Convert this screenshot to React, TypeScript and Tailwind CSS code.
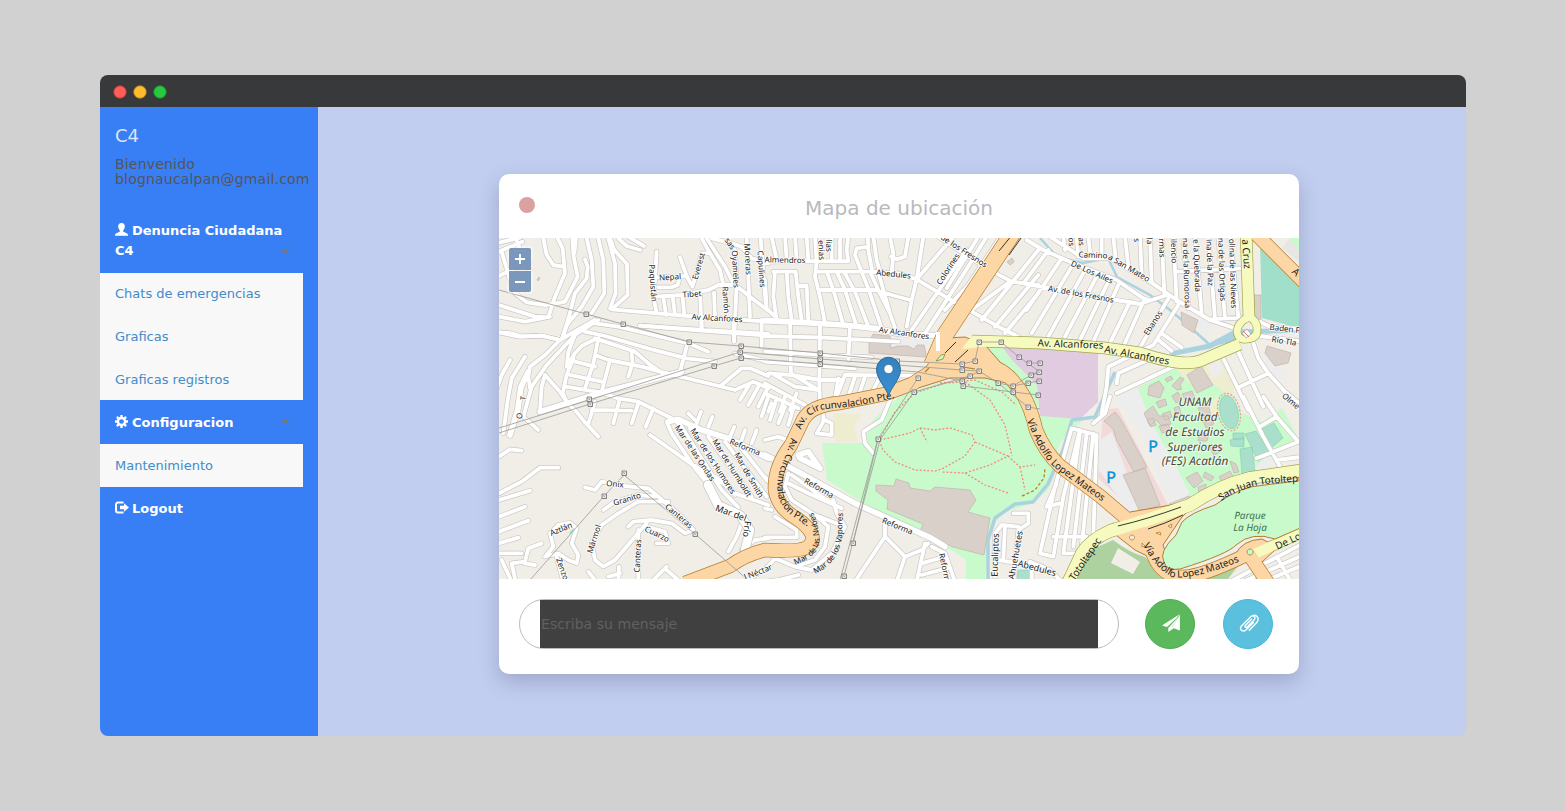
import React from 'react';

type Tile = { x: number; y: number; streets: string; wide?: string };
type Label = [text: string, x: number, y: number, angle?: number, size?: number];

/* Street geometry is stored in 1/3 pixel units, one block per map tile. */
const tiles: Tile[] = [
  {
    x: 495, y: 170,
    streets:
      'M12,218L75,203M12,245L82,215M12,318L70,290L105,278M62,204L80,250L105,300M20,245L45,330L60,370L95,397L150,405L180,400M145,205L155,255L175,285L205,290M188,205L203,235L210,310L180,380L160,442L120,440L12,405M12,440L90,455L165,440M232,205L236,260L248,320L210,395L170,403M243,205L238,250M275,205L290,270L295,350L260,410L215,465L203,500M310,205L325,270L328,370L290,430M340,205L360,280L362,370L345,415M345,205L358,240L396,282L398,375L350,418M270,268L278,290L275,325L240,370L222,440L203,500M12,487L50,490L80,500L140,497L195,510M370,205L395,228L435,240M400,200L447,228M350,418L580,438L820,455M435,467L620,482L820,497M485,245L480,330L475,380L485,430M482,322L575,318M555,262L575,318L592,350L605,310L620,250L640,250M490,352L530,352L548,345L552,330M480,380L560,375L640,360L670,345L720,345M505,380L513,435M533,380L540,435M562,375L568,435M615,365L620,480M657,368L660,440M620,205L645,250L675,300L685,345M635,205L690,290L715,340L765,380L820,422M650,205L710,220L740,230L770,265L820,280M720,240L725,345L717,515M755,205L765,440M797,205L812,400',
  },
  {
    x: 495, y: 320,
    streets:
      'M222,0L203,50M310,0L240,45L155,135L110,200L85,290L130,330M12,37L70,50L140,47L195,60L255,25L300,0M195,60L150,105L105,140L100,170L105,205M240,45L220,95L215,140M236,115L215,165L203,220L215,245M270,35L330,48L470,88L575,115L660,125M300,10L370,20L580,70L640,95M300,55L420,95L460,130L495,155M300,58L260,78L240,100L215,140M310,55L295,130L270,205M240,125L300,140M300,105L340,120L440,140L495,155M225,165L320,185M213,200L320,218M345,120L320,215M410,100L413,130L400,170M575,80L555,155M495,155L720,210L775,185L820,205M150,165L190,210L215,245M150,165L140,200L135,275M215,250L240,270L268,305L310,350M320,218L370,235L430,245L530,295M45,120L20,165L8,200M90,110L50,175L38,240L25,340M300,245L293,270L280,310M290,270L410,272M375,235L355,310M430,250L410,310M475,265L452,320M435,17L600,28L820,42M620,0L620,30M715,0L717,65M800,0L800,80M680,195L740,145L765,145L820,168M765,190L735,240M790,200L760,255M820,200L790,260M580,280L600,300M618,275L605,310M652,290L640,320M720,100L820,125M718,320L705,350M750,330L740,360M785,330L770,370',
    wide: 'M135,275L320,218L560,155M100,155L78,200L68,270L45,345',
  },
  {
    x: 765, y: 230,
    streets:
      'M0,95L250,93L245,60L250,20M150,20L155,95L150,140L165,200L180,280M20,20L35,90M60,20L65,90M90,20L95,90M125,20L130,90M200,20L200,93M225,20L225,93M25,125L92,125M30,125L25,200L35,270M65,125L70,200L80,270M92,125L100,200L110,270M102,168L125,168L130,275M0,150L5,235L40,270M160,125L320,125L400,130L455,148L550,205L700,290L760,320M160,180L330,180L380,195L435,210M185,125L205,180L235,285M215,125L240,180L275,290M240,130L270,185L310,290M290,125L315,190L350,295M315,125L340,180L375,250L392,300M340,125L355,180L375,250M270,75L290,125M270,75L275,55L310,50L308,20M308,50L322,125M325,20L335,90L345,125M375,20L385,70L380,130M430,20L420,80L395,88L378,80M455,148L440,210L425,290M475,20L455,148M565,20L455,148M605,60L440,300M665,20L600,125L480,310M700,30L610,165L540,240M520,20L665,115L740,155L820,165M650,270L820,60M690,290L820,135M720,310L820,190M620,240L735,155M640,20L545,175M0,318L160,322L400,335M75,275L78,430M165,285L163,470L165,520M255,290L250,390M0,365L320,382M0,395L270,415M10,430L80,435L165,450L235,450M20,430L90,470L160,480M78,430L160,480M240,435L445,437M240,435L215,500M270,440L250,500M300,440L280,500M345,440L320,490M400,440L380,480M0,460L120,525M0,490L100,535M20,520L10,545M60,500L45,545M210,505L220,445',
    wide: 'M0,272L120,278L235,285L330,295L400,310L530,318',
  },
  {
    x: 1030, y: 230,
    streets:
      'M-20,160L60,175L260,210L330,222L410,195M60,20L160,85L240,85L360,155L440,210L540,270L630,300M-10,30L40,60L130,100L260,150L340,205L360,212M55,60L-20,160M95,85L-10,240M125,110L5,310M165,120L55,320M200,140L105,320M235,155L150,330M265,165L190,335M300,215L235,350M340,215L280,350M415,205L320,370M445,225L370,345L235,410L230,470L215,550M320,370L365,385L265,430L260,460M100,20L105,60M140,20L145,80M175,20L180,65M215,20L215,75M250,20L258,95M285,20L295,110M330,20L335,130M360,20L365,155M395,20L403,190M430,20L440,215M460,20L475,235M495,20L515,250M535,20L555,265M565,20L585,265M600,20L625,260M440,125L630,115M540,268L650,262M690,275L720,290L820,298M690,318L820,335M670,340L685,385L715,430L765,485L820,530M620,355L700,530M575,375L655,540M630,470L715,430M260,490L430,410M395,310L455,352M385,330L425,362',
  },
  {
    x: 495, y: 400,
    streets:
      'M12,170L45,148L80,152M12,280L80,245L135,203L190,203M12,300L105,272M12,350L90,320M12,395L100,362M12,430L70,413M12,460L80,460M465,105L530,150L600,200M515,65L530,100L590,190M600,200L660,230L720,280L820,315M540,62L560,80L680,270L730,322M585,85L720,285M640,110L770,290M690,125L815,290M740,145L815,240M270,262L300,270L320,245L390,258L460,265L560,350L595,390L570,400L530,370L470,360L415,365L400,380M325,330L360,305L430,285L480,290M520,305L430,305L370,340L320,375L290,430L300,480L325,500L360,480L455,370M430,390L430,545M455,380L510,395L520,430L485,430M150,470L175,440L165,400L190,375L225,368L245,385L230,430L250,465L245,490L220,480L190,460L150,470M140,430L100,445L90,485L50,490L62,545M90,490L120,495M185,470L205,545M740,370L725,410L700,455M470,545L515,500M372,500L370,545M340,530L375,520M750,545L820,500M515,510L550,540M280,515L300,540M20,480L50,545M740,450L780,420L820,415',
    wide: 'M520,65L550,58L620,90L700,115L820,175M600,200L640,250L660,300L690,325',
  },
  {
    x: 765, y: 400,
    streets:
      'M70,220L60,260L80,300L150,345L190,380L180,440L150,480L90,500L30,475L0,510M80,225L170,290L205,310M70,250L130,280L230,325M205,300L215,340L240,380L200,460L140,510L90,500M150,345L240,380M0,230L15,250M30,350L70,375L95,390L95,412L0,412M0,325L20,330M360,365L360,410L270,545M360,410L420,470L470,450L490,430M420,470L395,545M480,430L455,545M500,440L540,460L570,545M470,490L540,470M470,525L545,505M375,0L350,60L295,95L300,130L325,160M175,45L175,65L155,100L200,105L200,70L180,60M0,120L40,110L80,125M-10,50L10,-10M15,60L35,-5M40,70L60,20M70,75L85,25M95,-20L75,30M745,340L790,340L790,370L760,390L745,545M760,380L710,375L690,400L690,530M720,380L715,480M700,480L820,500M800,545L800,500M0,545L40,540L100,525',
    wide: 'M0,165L80,205L270,310L380,360L500,415L540,440M100,165L130,155L165,205L105,175Z',
  },
  {
    x: 1030, y: 400,
    streets:
      'M125,85L75,260L30,460L70,470L100,290L150,90M125,85L200,105L190,410M150,95L100,460L135,460M170,100L130,440M190,100L155,440M70,410L170,410L165,440M50,320L80,250M50,320L90,310M0,485L60,510L95,545M240,-10L225,40L190,70M640,-10L700,110L750,200M690,80L740,50M700,-10L740,50L805,125L680,175M740,180L820,170M600,545L820,430M640,545L820,465M700,545L820,495M670,500L720,545M740,470L780,540M170,440L190,405L250,375',
  },
];

const minorLabels: Label[] = [
  ['Paquistán', 653, 283, 86], ['Nepal', 670, 277, -4], ['Everest', 698.5, 266, -74], ['Tibet', 692, 294, -4],
  ['Ramón', 726, 300, 86], ['Oyameles', 735.5, 269, 87], ['sas', 730, 243.5, 55], ['Moreras', 748, 259, 87],
  ['Capulines', 761.5, 269, 86], ['Almendros', 785, 260, 1], ['lias', 829, 245.5, 88], ['enias', 821.5, 250, 88],
  ['Abedules', 893.5, 274, 6], ['Colorines', 948, 269, -57], ['de los Fresnos', 964, 251, 33],
  ['Av Alcanfores', 717, 318, 3], ['Av Alcanfores', 904, 333, 8], ['Camino', 1093, 255, 2], ['a San Mateo', 1129, 268, 30],
  ['De Los Ailes', 1092, 272, 24], ['Av. de los Fresnos', 1081, 294, 10], ['Ebanos', 1153, 323, -57],
  ['os', 1071.500, 242, 88], ['as', 1081.5, 241.5, 88], ['s', 1137, 240, 88], ['la', 1149.5, 241, 88],
  ['rmas', 1162, 248, 88], ['ilencio', 1174, 251, 88], ['ina de la Rumorosa', 1186.5, 272, 88],
  ['e la Quebrada', 1197, 265.500, 88], ['ina de la Paz', 1210, 262.500, 88], ['na de las Ortigas', 1222, 269.500, 88],
  ['olina de las Nieves', 1233, 273.500, 88], ['Baden P', 1285, 328.500, 6], ['Río Tla', 1284, 341, 9],
  ['Olme', 1291, 401, 40], ['Reforma', 745, 447, 22], ['Mar de las Ondas', 695, 453, 56],
  ['Mar de los Humores', 713, 461, 57], ['Mar de Humboldt', 732, 468, 58], ['Mar de Smith', 749, 475, 60],
  ['Mar del', 731, 513, 20, 9], ['Frío', 747, 529, 96, 9], ['Canteras', 679, 516, 40], ['Cuarzo', 657, 534, 26],
  ['Canteras', 637.5, 556, -87], ['Mármol', 594, 539, -72], ['Granito', 627, 499, -17], ['Onix', 615, 484, 5],
  ['Aztlán', 561, 529, -22], ['Zenzo', 562.500, 569, 70], ['l Néctar', 758, 572, -22], ['O', 519.5, 416, -85, 8],
  ['T', 523, 398, -85, 7], ['Reforma', 819, 488, 29], ['Reforma', 897.5, 526, 22], ['Reform', 944.500, 567, 78],
  ['Eucaliptos', 995, 555, -88, 9], ['Ahuehuetes', 1015.5, 555, -80, 8.7], ['Abedules', 1037, 568, 15, 9],
];

const mainLabels: Label[] = [
  ['Av. Alcanfores', 1070.5, 344, 2, 10], ['Av. Alcanfores', 1137, 355, 11, 10], ['a Cruz', 1246.500, 254, 86, 10],
  ['Totoltepec', 1085, 559, -56, 10], ['De Lo', 1288, 541, -25, 10], ['A', 1296, 272, 42, 10],
];

const curved: [id: string, d: string, text: string, size: number][] = [
  ['circ-a', 'M801,430 Q806,414 822,409.500 L852,406.500 L895,398', 'Av. Circunvalacion Pte.', 9.9],
  ['circ-b', 'M791,438 Q789,447 785,457 Q774,480 779,498 Q783,511 796,518 L809,528', 'Av. Circunvalacion Pte.', 9.8],
  ['via-a', 'M1027,420 Q1040,455 1055,468 L1107,505', 'Vía Adolfo Lopez Mateos', 9.9],
  ['via-b', 'M1143,545 Q1155,568 1172,577 Q1195,580 1243,560', 'Vía Adolfo Lopez Mateos', 9.9],
  ['juan', 'M1221,501 Q1243,486 1270,483.500 L1320,480', 'San Juan Totoltepe', 9.9],
  ['nubes', 'M795,565 Q823,554 819,536 Q818,520 811,509', 'Mar de las Nubes', 8],
  ['vapores', 'M815,574 Q838,563 842,538 L843,510', 'Mar de los Vapores', 8],
];

const pylons: [number, number][] = [
  [586, 314], [623, 324], [689, 342], [741, 346], [740, 352], [741, 358], [714, 366], [820, 353], [820, 359], [820, 364],
  [897, 361], [589, 399], [590, 404], [624, 473], [604, 496], [695, 534], [853, 543], [844, 576], [878, 439], [914, 392],
  [918, 378], [962, 364], [962, 370], [975, 361], [979, 342], [1001, 342], [1019, 357], [1029, 363], [1040, 363],
  [1039, 372], [1031, 375], [1039, 381], [1028, 383], [1038, 395], [1028, 407], [1013, 386], [1013, 392], [998, 383],
  [979, 371], [970, 376], [962, 381], [963, 386],
];

const orangeRoads: [string, number][] = [
  ['M1016,228L945,335L932,365', 16],
  ['M1250,228L1305,283', 13],
  ['M940,366L912,384L885,394L840,403Q811,405 803,420L791,445Q774,467 775,490Q778,508 796,518Q821,535 808,547Q800,552 765,550Q745,555 730,566L685,583', 13],
  ['M945,365L975,366Q1000,362 1017,386Q1030,402 1036,430Q1045,452 1060,466L1100,496L1133,524L1150,545Q1158,575 1180,577Q1200,578 1250,553', 13],
  ['M1248,553L1268,583', 13],
];

const yellowRoads: [string, number][] = [
  ['M972,341L1040,343L1105,348L1140,353Q1182,367 1200,361L1240,344', 11],
  ['M1246,230L1249,318', 11],
  ['M1067,585L1082,553Q1090,540 1110,531L1150,519L1190,505Q1220,485 1250,478L1305,470', 12],
  ['M1250,556L1305,531', 10],
];

const roundabout = 'M1249,317Q1238,322 1237,331Q1238,341 1247,339Q1257,338 1257,331Q1258,321 1249,317Z';

function CityMap() {
  const tile = (t: Tile) => `translate(${t.x} ${t.y}) scale(0.33333)`;
  const label = ([text, x, y, a = 0, size = 8]: Label, i: number) => (
    <text key={i} fontSize={size} textAnchor="middle" dy="0.35em" transform={`translate(${x} ${y}) rotate(${a})`}>
      {text}
    </text>
  );
  return (
    <svg viewBox="499 238 800 341" className="block h-[341px] w-[800px] font-['Noto_Sans','Open_Sans',sans-serif]" textRendering="geometricPrecision">
      <rect x="499" y="238" width="800" height="341" fill="#f1eee8" />

      {/* parks and land use */}
      <g fill="#c8facc">
        <path d="M822,443L863,443L873,420L900,396L940,382L985,378L1012,386L1025,405L1034,440L1055,470L1048,490L1033,503L1005,512L992,525L987,556L985,580L966,580L966,560L950,549L887,518L827,480Z" />
        <path d="M983,347L1040,348L1040,408L1025,400L1010,370L990,362Z" />
        <path d="M1036,414L1085,418L1062,440L1052,462L1040,440Z" />
        <path d="M1137,388L1178,367L1232,393L1240,412L1262,422L1282,408L1299,440L1240,476L1190,500L1177,470L1150,425Z" />
        <path d="M1290,238h9v22Z" />
      </g>
      <path d="M1290,238l9,14v10l-17,-14z" fill="#e8e5e5" />
      <path d="M1003,348L1098,350L1098,402L1080,419L1040,416L1037,385L1012,360Z" fill="#e0cbe0" />
      <path d="M1175,367L1222,352L1236,385L1232,400L1208,378L1190,384ZM1208,405L1218,395L1216,424L1212,426ZM833,413L863,414L854,426L858,442L835,442Z" fill="#efedd0" />
      <path d="M1103,410L1118,408L1168,505L1145,522L1098,478Z" fill="#f2dada" />
      <path d="M1117,395L1137,385L1150,420L1178,470L1190,494L1170,505L1140,430L1118,405ZM1100,440L1112,432L1143,518L1135,521L1099,470ZM1195,322L1210,315L1213,327L1204,338ZM1207,366L1218,358L1224,372L1214,379ZM1262,350L1287,372L1285,378L1272,379ZM890,335L930,338L925,352L890,350ZM534,238h4v12h-4zM1256,466l10,-9 9,2 1,5-20,5z" fill="#ededed" />
      <path d="M1113,540Q1130,553 1145,557L1162,575L1180,583L1060,583L1080,555ZM1200,579L1238,566L1225,583Z" fill="#aed1a0" />
      <path d="M1118,548L1140,562L1133,574L1111,563Z" fill="#f1eee8" />
      <path d="M1260,244L1305,290L1305,330L1262,318Z" fill="#a2dfcb" />
      <g fill="#aae0cb" stroke="#7fcfb2" strokeWidth=".6">
        <path d="M1262,429l12,-6 9,15-12,10zM1245,434l11,-3 14,22-12,8zM1240,449l12,-2 3,25-13,2zM1230,440l14,-2v9l-13,-1zM1233,433h11v6h-11zM1018,570h13v10h-14z" />
        <ellipse cx="1229" cy="412" rx="9" ry="17" transform="rotate(-12 1229 412)" />
      </g>
      <ellipse cx="1229" cy="412" rx="11" ry="19" transform="rotate(-12 1229 412)" fill="none" stroke="#f09a8e" strokeWidth="1.200" strokeDasharray="2 1.500" />

      {/* water */}
      <g fill="none" stroke="#aad3df" strokeLinejoin="round">
        <path d="M1040,238L1057,257L1083,263L1108,258L1117,277L1150,295L1170,310L1190,327L1210,345" strokeWidth="2.500" />
        <path d="M1170,354L1210,346L1240,332L1305,330" strokeWidth="5" />
        <path d="M1210,345L1238,330L1238,338Z" strokeWidth="4" fill="#aad3df" />
        <path d="M988,583L988,540L995,518L1015,504L1033,502L1048,484L1063,450L1072,420L1095,417L1115,372" strokeWidth="3.500" />
      </g>

      {/* buildings */}
      <g fill="#d9d0c9" stroke="#c2b4aa" strokeWidth=".7">
        <path d="M876,485L894,486L896,479L909,483L910,488L930,491L935,487L970,490L976,500L968,512L990,518L984,555L953,547L920,532L923,524L887,509L888,500L876,491Z" />
        <path d="M869,342L873,334L890,336L891,348L898,346L908,346L914,349L917,345L924,345L926,354L925,357L869,353Z" />
        <path d="M1104,421l11,-9 6,8 26,47 -13,5 -17,-31 -4,-12zM1123,475l22,-7 15,37-20,7zM1187,375l14,-9 12,19-16,8zM1181,312l17,8-4,13-12,-8zM1267,346l24,7-3,10-13,3-10,-13zM1254,295h7v27h-6zM1169,504l20,-8 3,4-20,7z" />
        <path d="M1149,386l10,-5 5,7-4,10-12,-3zM1165,379l6,-3 2,3-6,3zM1172,386l8,-9 4,2-4,6 2,4-5,1zM1144,413l9,-7 6,10 9,0 3,8-9,2-6,-6-6,6zM1182,394l10,-3 3,7-8,5zM1198,408l10,-4 3,12-8,4zM1203,421l8,-3 3,6-8,4zM1172,396l6,-4 4,8-6,3zM1156,402l9,-3 2,6-8,3zM1162,414l8,-3 2,6-7,3zM1200,432l9,2-2,7-9,0zM1210,448l10,-4 3,5-9,7zM1186,478l11,-6 6,9-9,7zM1198,487l8,-3v5l-7,5zM1219,477l11,-6 5,8-13,3zM1159,426l9,-2 3,6-9,3zM1174,408l5,-2 2,8-5,2zM1205,472l9,5-3,4-8,-4zM1230,461l6,3 3,8-5,1zM1147,420l6,-2 3,7-5,2z" />
        <path d="M537,280l2,-3 1,1-2,3zM1007,262l5,-4 2,4-4,3z" />
      </g>

      {/* residential streets */}
      <g fill="none" strokeLinecap="round" strokeLinejoin="round">
        <g stroke="#c9c8c5">
          {tiles.map((t, i) => (
            <g key={i} transform={tile(t)}>
              <path d={t.streets} strokeWidth="15.500" />
              {t.wide && <path d={t.wide} strokeWidth="21" />}
            </g>
          ))}
        </g>
        <g stroke="#fff">
          {tiles.map((t, i) => (
            <g key={i} transform={tile(t)}>
              <path d={t.streets} strokeWidth="11.500" />
              {t.wide && <path d={t.wide} strokeWidth="17" />}
            </g>
          ))}
        </g>
        <path d="M708,485L718,505L740,515L750,530L745,550" stroke="#c9c8c5" strokeWidth="10" />
        <path d="M708,485L718,505L740,515L750,530L745,550" stroke="#fff" strokeWidth="8.500" />
      </g>

      {/* footpaths */}
      <g fill="none" stroke="#f58a7d" strokeWidth="1.300" strokeDasharray="2 1.800">
        <path d="M880,440L910,433L920,428L935,430L950,428L972,435L975,442L965,456L942,469L935,471L915,470L895,462L883,450L879,440M920,428L927,442M975,442L1008,456L990,465L965,473L942,472M965,473L985,485L1008,493M1008,456L1020,467L1035,465M1020,467L1025,490M879,440L895,412L915,393L945,383L965,382M965,382L990,400L1005,425L1012,456M940,383L975,380L1002,392L1016,405" />
        <path d="M1022,496L1035,490L1044,478L1045,468" stroke="#b98a28" strokeWidth="1.400" strokeDasharray="3 2" />
      </g>

      {/* primary and secondary roads */}
      <g fill="none" strokeLinejoin="round">
        {yellowRoads.map(([d, w], i) => <path key={i} d={d} strokeWidth={w + 1.4} stroke="#a1a850" />)}
        <path d={roundabout} stroke="#a1a850" strokeWidth="8.400" />
        {orangeRoads.map(([d, w], i) => <path key={i} d={d} strokeWidth={w + 1.4} stroke="#b37e2c" />)}
        <path d="M930,362L948,338L965,337L985,345L1000,362L1010,384L985,378L950,378L915,389L916,378Z" fill="#fcd6a4" stroke="#b37e2c" strokeWidth="1" />
        <path d="M1112,532L1130,512L1200,500L1182,517L1163,545L1172,571L1155,560L1135,550Z" fill="#fcd6a4" stroke="#b37e2c" strokeWidth="1" />
        <path d="M1235,555Q1242,540 1262,539Q1272,543 1276,549L1262,562Z" fill="#fcd6a4" stroke="#b37e2c" strokeWidth="1" />
        {yellowRoads.map(([d, w], i) => <path key={i} d={d} strokeWidth={w} stroke="#f7fabf" />)}
        <path d={roundabout} stroke="#f7fabf" strokeWidth="7" />
        {orangeRoads.map(([d, w], i) => <path key={i} d={d} strokeWidth={w} stroke="#fcd6a4" />)}
        <path d="M1110,531L1150,519L1190,505Q1220,485 1250,478" stroke="#f7fabf" strokeWidth="12" />
        <path d="M962,349L970,338L985,341L980,347Z" fill="#f7fabf" />
        <path d="M1164,562Q1158,552 1176,535L1182,522Q1190,513 1215,505Q1240,486 1265,485L1305,480L1305,526L1275,539Q1252,531 1236,545Q1228,554 1180,569Q1166,571 1164,562Z" fill="#c8facc" stroke="#b37e2c" strokeWidth="1" />
        <path d="M1118,526Q1148,519 1181,507M1148,529L1165,523L1183,515M999,251L1012,235M1009,255L1021,238M945,353L956,342M955,362L968,350" stroke="#3a3528" strokeWidth="1" />
        <path d="M936,361l5,-6 4,-1 -2,5zM1250,549a3,3 0 1 0 .1,0" fill="#c8facc" stroke="#8c8a30" strokeWidth=".8" />
        <path d="M925,372l4,-4M963,367l12,2" stroke="#a8842c" strokeWidth="1.200" />
        <path d="M1132,535a2.500,2.500 0 1 0 .1,0zM1156,533l4,-1 1,3zM1142,543l3,3-3,1zM1168,526l4,-2-1,4z" fill="#f1eee8" stroke="#b37e2c" strokeWidth=".8" />
        <path d="M938,332V351" stroke="#fff" strokeWidth="4" />
        <path d="M1242,333l5,-4 4,5-5,4z" fill="#fff" stroke="#888" strokeWidth=".6" />
        <path d="M1243,331l6,6" stroke="#d9705f" strokeWidth="1" />
      </g>

      {/* power lines */}
      <path
        d="M499,290L586,314L689,342L741,346L820,353L897,361L962,364L975,361L979,342L1001,342L1019,357L1040,372L1031,375L1013,386L998,383L979,371L962,370L820,359L740,352L589,400L499,428M499,433L590,404L714,366L741,358L820,364L918,372L962,381L970,376L979,371M962,381L963,386L1013,392L1038,395M998,383L1028,407L1040,409M1029,363H1040M1031,375L1039,372M1028,383L1039,381M1013,386L1028,383M853,543L878,439L918,378M844,576L880,440L914,392L970,376M840,580L878,439M624,475L695,534L748,580M624,475L604,496L530,580"
        fill="none" stroke="#9b9996" strokeWidth=".8"
      />
      {pylons.map(([x, y], i) => (
        <g key={i} fill="#f4f2ee" stroke="#777" strokeWidth=".9">
          <path d={`M${x - 2},${y - 2}h4.500v4.500h-4.500z`} />
          <path d={`M${x - 1},${y - 1}l2.500,2.500m0,-2.500l-2.500,2.500`} strokeWidth=".5" />
        </g>
      ))}
      <path d="M569,533l4,-4 2,1-4,4z" fill="#8fdcc0" />

      {/* names */}
      <g fill="#222" stroke="#fff" strokeOpacity=".75" strokeWidth="2" strokeLinejoin="round" paintOrder="stroke">
        {minorLabels.map(label)}
      </g>
      <g fill="#222">
        {mainLabels.map(label)}
        {curved.map(([id, d, text, size]) => (
          <g key={id}>
            <path id={id} d={d} fill="none" />
            <text fontSize={size}><textPath href={`#${id}`}>{text}</textPath></text>
          </g>
        ))}
      </g>
      <g fontStyle="italic" fontSize="11.800" textAnchor="middle" fill="#4c4a3a" stroke="#fff" strokeOpacity=".6" strokeWidth="2" paintOrder="stroke">
        <text x="1195" y="406">UNAM</text>
        <text x="1195" y="421">Facultad</text>
        <text x="1195" y="436">de Estudios</text>
        <text x="1195" y="450.500">Superiores</text>
        <text x="1195" y="465">(FES) Acatlán</text>
      </g>
      <g fontStyle="italic" fontSize="10" textAnchor="middle" fill="#3f7350">
        <text x="1250" y="518.500">Parque</text>
        <text x="1250" y="531">La Hoja</text>
      </g>
      <g fontSize="16" textAnchor="middle" fill="#0092da" stroke="#0092da" strokeWidth=".4">
        <text x="1153" y="451.500">P</text>
        <text x="1111" y="482.500">P</text>
      </g>

      {/* location pin */}
      <defs>
        <linearGradient id="pin" x1="0" y1="0" x2="0" y2="1">
          <stop offset="0" stopColor="#3580bf" />
          <stop offset="1" stopColor="#3a8fd2" />
        </linearGradient>
      </defs>
      <path d="M888.500,396.500C887,388 876.500,380 876.500,369.500A12,12.300 0 0 1 900.500,369.500C900.500,380 890,388 888.500,396.500Z" fill="url(#pin)" stroke="#2e6c97" strokeWidth="1" />
      <circle cx="888.500" cy="369" r="4.600" fill="#fff" stroke="#2e6c97" strokeWidth=".7" />
    </svg>
  );
}

const UserIcon = () => (
  <svg viewBox="0 0 14 14" className="mr-1 inline-block size-[13px] align-[-1px]" fill="#fff">
    <path d="M7 0C4.600 0 3.300 1.600 3.400 3.900c.1 1.600.8 3 1.700 3.900.3.300.2 1.300-.2 1.600L1 11.300C.3 11.700 0 12.200 0 13v.8h14V13c0-.8-.3-1.300-1-1.700L9.100 9.400c-.4-.3-.5-1.300-.2-1.600.9-.9 1.600-2.300 1.700-3.900C10.700 1.600 9.400 0 7 0Z" />
  </svg>
);

const CogIcon = () => (
  <svg viewBox="0 0 14 14" className="mr-1 inline-block size-[13px] align-[-1px]">
    <circle cx="7" cy="7" r="3.800" fill="none" stroke="#fff" strokeWidth="2.500" />
    <path d="M7 0v2.500M7 11.500V14M0 7h2.500M11.500 7H14M2 2l1.900 1.900M10.100 10.100 12 12M12 2l-1.900 1.900M3.900 10.100 2 12" stroke="#fff" strokeWidth="2.500" />
  </svg>
);

const LogoutIcon = () => (
  <svg viewBox="0 0 14 13" className="mr-[3px] inline-block h-[13px] w-[14px] align-[-1px]">
    <path d="M8.500 1.500H3A2 2 0 0 0 1 3.500v6A2 2 0 0 0 3 11.500h5.500" fill="none" stroke="#fff" strokeWidth="2" />
    <path d="M5 4.800h4V2.300l5 4.200-5 4.200V8.200H5Z" fill="#fff" />
  </svg>
);

const Caret = () => (
  <svg viewBox="0 0 8 4" className="block h-1 w-2" fill="#777"><path d="M0 0h8L4 4Z" /></svg>
);

function SubItem({ children }: { children: React.ReactNode }) {
  return <li className="h-[43px] px-[15px] pt-[11px] leading-5 text-[#428bca]">{children}</li>;
}

function Sidebar() {
  return (
    <aside className="w-[218px] bg-[#387ff5]">
      <div className="h-[99px] pl-[15px] pt-[19px]">
        <h4 className="text-[18px] leading-[20px] text-[#dce5f5]">C4</h4>
        <p className="mt-[11px] whitespace-nowrap text-[14px] leading-[15px] tracking-[0.19px] text-[#555]">
          Bienvenido<br />blognaucalpan@gmail.com
        </p>
      </div>
      <nav className="w-[203px] text-[13px]">
        <div className="flex h-[67px] items-start justify-between pl-[15px] pr-[14px] pt-[15px] font-bold leading-5 text-white">
          <span className="-mr-5 w-[174px]"><UserIcon />Denuncia Ciudadana C4</span>
          <span className="mt-[29px]"><Caret /></span>
        </div>
        <ul className="h-[127px] bg-[#f8f8f8]">
          <SubItem>Chats de emergencias</SubItem>
          <SubItem>Graficas</SubItem>
          <SubItem>Graficas registros</SubItem>
        </ul>
        <div className="flex h-[44px] items-center justify-between pl-[15px] pr-[14px] font-bold text-white">
          <span className="pt-[2px]"><CogIcon />Configuracion</span>
          <span className="-mt-px"><Caret /></span>
        </div>
        <ul className="h-[43px] bg-[#f8f8f8] pt-px">
          <SubItem>Mantenimiento</SubItem>
        </ul>
        <div className="flex h-[43px] items-center pl-[15px] font-bold text-white">
          <span><LogoutIcon />Logout</span>
        </div>
      </nav>
    </aside>
  );
}

const WindowButtons = () => (
  <svg viewBox="0 0 54 14" className="h-[14px] w-[54px]">
    <circle cx="7" cy="7" r="6.100" fill="#ff5f56" stroke="#e0443e" />
    <circle cx="27" cy="7" r="6.100" fill="#ffbd2e" stroke="#dea123" />
    <circle cx="47" cy="7" r="6.100" fill="#27c93f" stroke="#1aab29" />
  </svg>
);

export default function App() {
  return (
    <div className="h-[811px] w-[1566px] bg-[#d1d1d1] px-[100px] pt-[75px] font-['DejaVu_Sans',sans-serif]">
      <div className="flex h-[661px] flex-col overflow-hidden rounded-lg">
        <header className="flex h-8 items-center bg-[#38393a] pl-[13px] pt-[2px]">
          <WindowButtons />
        </header>
        <div className="flex flex-1">
          <Sidebar />
          <main className="flex-1 bg-[#c1cef0] pl-[181px] pt-[67px]">
            <section className="h-[500px] w-[800px] overflow-hidden rounded-[10px] bg-white shadow-[0_8px_20px_rgba(60,60,90,0.25)]">
              <div className="grid h-[64px] grid-cols-[1fr_auto_1fr] items-start px-5 pt-[23px]">
                <i className="size-4 rounded-full bg-[#dba0a0]" />
                <h3 className="text-[20px] leading-[22px] text-[#b9b9be]">Mapa de ubicación</h3>
              </div>
              <div className="relative">
                <CityMap />
                <div className="absolute left-[8px] top-[8px] flex flex-col gap-px rounded bg-white/40 p-[2px]">
                  <button className="flex h-[22px] w-[22px] items-center justify-center rounded-t-[2px] bg-[#7b98bc]">
                    <svg viewBox="0 0 10 10" className="size-[10px]"><path d="M5 0v10M0 5h10" stroke="#fff" strokeWidth="1.800" /></svg>
                  </button>
                  <button className="flex h-[21px] w-[22px] items-center justify-center rounded-b-[2px] bg-[#7b98bc]">
                    <svg viewBox="0 0 10 10" className="size-[10px]"><path d="M0 5h10" stroke="#fff" strokeWidth="2" /></svg>
                  </button>
                </div>
              </div>
              <div className="flex pl-5 pt-5">
                <div className="h-[50px] w-[600px] rounded-full border border-[#bbb] px-5">
                  <div className="flex h-12 items-center bg-[#404040] pl-px text-[14px] tracking-[0.04px] text-[#606060]">Escriba su mensaje</div>
                </div>
                <button className="ml-[26px] flex size-[50px] items-center justify-center rounded-full border border-[#4cae4c] bg-[#5cb85c]">
                  <svg viewBox="0 0 18 18" className="ml-[2px] -mt-[3px] size-[18px]" fill="#fff">
                    <path d="M17.500.200 0 11.500l4.900 1.500L14.500 4.200ZM17.900.400V16.600L11.800 14.300 6.300 18V14L16 3.600 10.300 12.800 9.600 14.400Z" />
                  </svg>
                </button>
                <button className="ml-7 flex size-[50px] items-center justify-center rounded-full border border-[#46b8da] bg-[#5bc0de]">
                  <svg viewBox="0 0 20 18" className="ml-[2px] -mt-[3px] h-[18px] w-[20px]" fill="none" stroke="#fff" strokeWidth="1.400" strokeLinecap="round">
                    <path d="m12.500 5.200-6 6c-1.300 1.500.3 2.900 1.700 1.700L15 6c2.600-2.600-.6-5.600-3.200-3.200L2.900 11.500c-3.400 3.600.7 7.400 4.300 4.200l7.300-7.300M10.300 16.200l7.200-7.400c3.700-4.200.3-8.800-4.300-7" />
                  </svg>
                </button>
              </div>
            </section>
          </main>
        </div>
      </div>
    </div>
  );
}
